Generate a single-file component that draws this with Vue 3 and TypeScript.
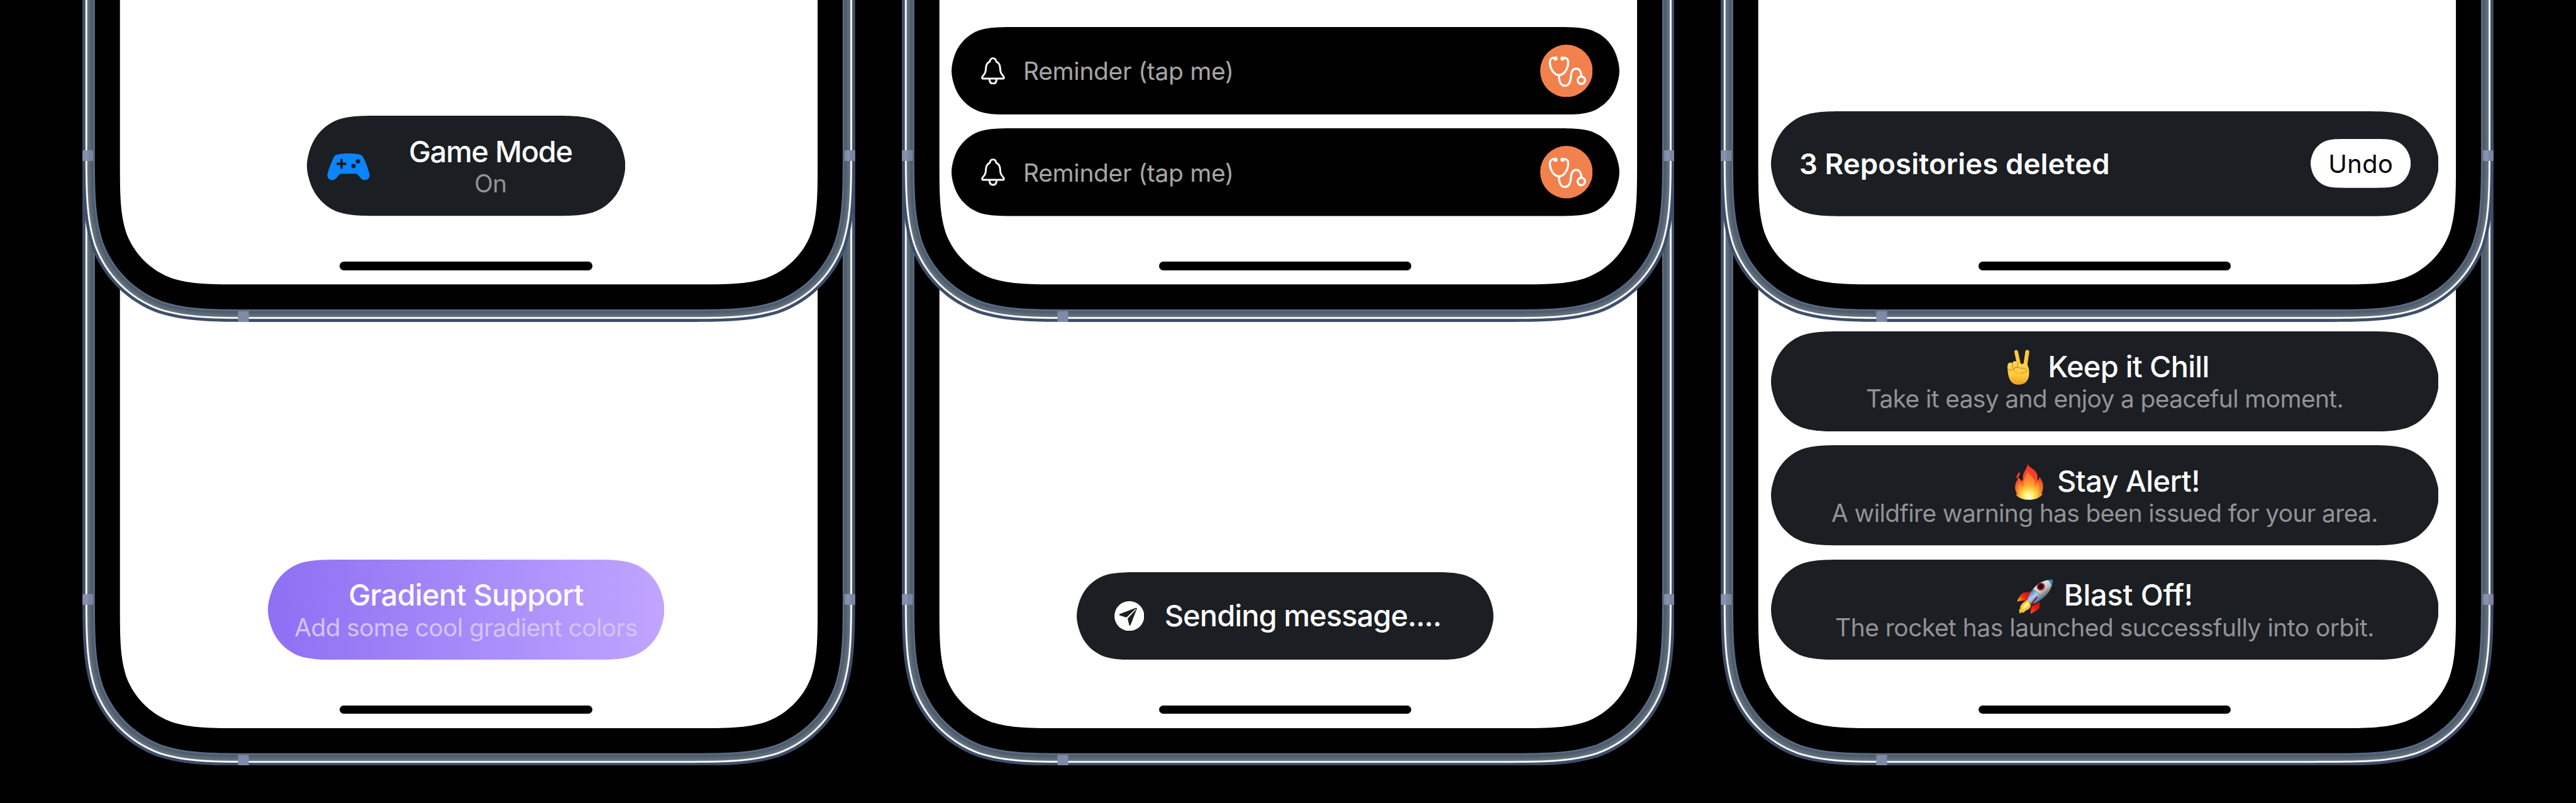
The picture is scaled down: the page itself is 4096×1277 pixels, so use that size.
<script setup lang="ts">
interface Ring { inset: number; color: string }
interface Notice {
  emoji: 'peace' | 'fire' | 'rocket'
  title: string
  titleTracking: number
  text: string
  textTracking: number
}

const PHONE_WIDTH = 1296
const OUTER_RADIUS = 201

/* Phone outline with continuous bottom corners; it runs off the top of the box. */
function framePath(inset: number, height: number): string {
  const r = OUTER_RADIUS - inset
  const L = inset
  const R = PHONE_WIDTH - inset
  const B = height - inset
  const a = 1.528665 * r, b = 1.08849 * r, c = 0.868407 * r
  const d = 0.631494 * r, e = 0.372824 * r, f = 0.16906 * r, g = 0.074911 * r
  return `M${L} 0V${B - a}C${L} ${B - b} ${L} ${B - c} ${L + g} ${B - d}` +
    `C${L + f} ${B - e} ${L + e} ${B - f} ${L + d} ${B - g}` +
    `C${L + c} ${B} ${L + b} ${B} ${L + a} ${B}H${R - a}` +
    `C${R - b} ${B} ${R - c} ${B} ${R - d} ${B - g}` +
    `C${R - e} ${B - f} ${R - f} ${B - e} ${R - g} ${B - d}` +
    `C${R} ${B - c} ${R} ${B - b} ${R} ${B - a}V0Z`
}

/* Capsule whose ends ease into the straight edges. */
function pillPath(w: number, h: number): string {
  const r = h / 2
  const p = (x: number, y: number) => `${x * r} ${y * r}`
  const q = (x: number, y: number) => `${w - x * r} ${y * r}`
  return `M${p(0, 1)}C${p(0, 0.88)} ${p(0.03, 0.76)} ${p(0.0749, 0.6315)}` +
    `C${p(0.16906, 0.3728)} ${p(0.3728, 0.16906)} ${p(0.6315, 0.0749)}` +
    `C${p(0.8684, 0)} ${p(1.0885, 0)} ${p(1.5287, 0)}L${q(1.5287, 0)}` +
    `C${q(1.0885, 0)} ${q(0.8684, 0)} ${q(0.6315, 0.0749)}` +
    `C${q(0.3728, 0.16906)} ${q(0.16906, 0.3728)} ${q(0.0749, 0.6315)}` +
    `C${q(0.03, 0.76)} ${q(0, 0.88)} ${q(0, 1)}` +
    `C${q(0, 1.12)} ${q(0.03, 1.24)} ${q(0.0749, 1.3685)}` +
    `C${q(0.16906, 1.6272)} ${q(0.3728, 1.83094)} ${q(0.6315, 1.9251)}` +
    `C${q(0.8684, 2)} ${q(1.0885, 2)} ${q(1.5287, 2)}L${p(1.5287, 2)}` +
    `C${p(1.0885, 2)} ${p(0.8684, 2)} ${p(0.6315, 1.9251)}` +
    `C${p(0.3728, 1.83094)} ${p(0.16906, 1.6272)} ${p(0.0749, 1.3685)}` +
    `C${p(0.03, 1.24)} ${p(0, 1.12)} ${p(0, 1)}Z`
}

const rings: Ring[] = [
  { inset: 0, color: '#3e4e69' },
  { inset: 4.9, color: '#b9bfc9' },
  { inset: 5.5, color: '#ffffff' },
  { inset: 7.8, color: '#c4c8ce' },
  { inset: 8.3, color: '#66717e' },
  { inset: 10, color: '#606c79' },
  { inset: 12, color: '#596675' },
  { inset: 14, color: '#526070' },
  { inset: 16, color: '#4b596a' },
  { inset: 18, color: '#5a6a80' },
  { inset: 21, color: '#000000' },
  { inset: 63, color: '#ffffff' },
]

const phones = [
  { id: 'game', column: 0, layer: 'front', height: 540 },
  { id: 'gradient', column: 0, layer: 'rear', height: 1084 },
  { id: 'reminders', column: 1, layer: 'front', height: 540 },
  { id: 'sending', column: 1, layer: 'rear', height: 1084 },
  { id: 'undo', column: 2, layer: 'front', height: 540 },
  { id: 'stack', column: 2, layer: 'rear', height: 1084 },
]
const columns = [0, 1, 2].map(c => phones.filter(p => p.column === c))

const notices: Notice[] = [
  { emoji: 'peace', title: 'Keep it Chill', titleTracking: -0.074, text: 'Take it easy and enjoy a peaceful moment.', textTracking: -0.064 },
  { emoji: 'fire', title: 'Stay Alert!', titleTracking: -0.066, text: 'A wildfire warning has been issued for your area.', textTracking: -0.066 },
  { emoji: 'rocket', title: 'Blast Off!', titleTracking: -0.02, text: 'The rocket has launched successfully into orbit.', textTracking: -0.049 },
]
</script>

<template>
  <main class="stage">
    <div v-for="(column, ci) in columns" :key="ci" class="column">
      <section v-for="phone in column" :key="phone.id" class="phone" :class="phone.layer">
        <svg class="frame" :viewBox="`0 0 1296 ${phone.height}`" preserveAspectRatio="none" aria-hidden="true">
          <defs>
            <linearGradient :id="`side-${phone.id}`">
              <stop offset="0" stop-color="#7d87a3" /><stop offset=".4" stop-color="#8b94b1" />
              <stop offset=".65" stop-color="#7b85a1" /><stop offset="1" stop-color="#7a849f" />
            </linearGradient>
          </defs>
          <path v-for="ring in rings" :key="ring.inset" :d="framePath(ring.inset, phone.height)" :fill="ring.color" />
          <rect x="0" :y="phone.height - 288" width="18" height="18" :fill="`url(#side-${phone.id})`" />
          <rect x="1278" :y="phone.height - 288" width="18" height="18" :fill="`url(#side-${phone.id})`" />
          <rect x="261" :y="phone.height - 18" width="18" height="18" fill="#808aa7" />
        </svg>

        <div class="screen">
          <div v-if="phone.id === 'game'" class="pill game">
            <svg class="shape" viewBox="0 0 534 168" preserveAspectRatio="none"><path :d="pillPath(534, 168)" fill="#1b1e22" /></svg>
            <svg class="controller" viewBox="0 0 72 45">
              <path fill="#0a84ff" fill-rule="evenodd" d="M16.5 2C27 -.5 45 -.5 55.500 2C58 2.600 59.700 4.200 60.900 6.800C65.500 16.500 69 25.500 71.200 34.500C72.400 40.500 68.500 44.700 63.500 44.700C60.200 44.700 57.800 43.200 56 40.800L50.800 34.900C50.200 34.200 49.400 33.900 48.500 33.900H23.500C22.600 33.900 21.800 34.200 21.200 34.900L16 40.800C14.200 43.200 11.800 44.700 8.500 44.700C3.500 44.700 -.4 40.500 .8 34.500C3 25.500 6.500 16.500 11.100 6.800C12.300 4.200 14 2.600 16.500 2ZM24.300 8.800C23 8.800 22.200 9.700 22.200 10.900V15.200H17.800C16.500 15.200 15.700 16.100 15.700 17.300S16.500 19.400 17.800 19.400H22.200V23.800C22.200 25 23 25.900 24.300 25.900S26.400 25 26.400 23.800V19.400H30.700C32 19.400 32.900 18.500 32.900 17.300S32 15.200 30.700 15.200H26.400V10.900C26.400 9.700 25.600 8.800 24.300 8.800ZM51.900 9.500A3.700 3.700 0 1 0 51.900 16.900A3.700 3.700 0 1 0 51.900 9.500ZM44.500 17.500A3.700 3.700 0 1 0 44.500 24.900A3.700 3.700 0 1 0 44.500 17.500Z" />
            </svg>
            <div class="copy">
              <div class="title" :style="{ letterSpacing: '-0.132rem' }">Game Mode</div>
              <div class="sub" :style="{ letterSpacing: '-0.07rem' }">On</div>
            </div>
          </div>

          <div v-else-if="phone.id === 'gradient'" class="pill gradient">
            <svg class="shape" viewBox="0 0 665 168" preserveAspectRatio="none">
              <defs><linearGradient id="violet"><stop offset="0" stop-color="#8f6ff3" /><stop offset=".5" stop-color="#a68af9" /><stop offset="1" stop-color="#c1a5ff" /></linearGradient></defs>
              <path :d="pillPath(665, 168)" fill="url(#violet)" />
            </svg>
            <div class="copy">
              <div class="title" :style="{ letterSpacing: '-0.073rem' }">Gradient Support</div>
              <div class="sub pale" :style="{ letterSpacing: '-0.061rem' }">Add some cool gradient colors</div>
            </div>
          </div>

          <template v-else-if="phone.id === 'reminders'">
            <div v-for="n in 2" :key="n" class="pill reminder">
              <svg class="shape" viewBox="0 0 1120 147" preserveAspectRatio="none"><path :d="pillPath(1120, 147)" fill="#000" /></svg>
              <svg class="bell" viewBox="0 0 40 46" fill="none" stroke="#fff" stroke-width="3.1" stroke-linecap="round" stroke-linejoin="round">
                <path d="M20 1.700C16.900 1.700 15.100 3.800 14.700 7.200C10.300 9 8.200 13.200 8 18.600C7.800 25.300 6.600 27.200 3.300 31C1 33.700 1.300 35.900 4 35.900H36C38.700 35.900 39 33.700 36.700 31C33.400 27.200 32.200 25.300 32 18.600C31.800 13.200 29.700 9 25.300 7.200C24.900 3.800 23.100 1.700 20 1.700Z" />
                <path d="M13.900 36.500C14.100 41 16.200 44.300 20 44.300S25.900 41 26.100 36.500" />
              </svg>
              <span class="label">Reminder (tap me)</span>
              <svg class="badge" viewBox="0 0 88 88" fill="none" stroke="#fff" stroke-width="3.500" stroke-linecap="round">
                <circle cx="44" cy="44" r="44" fill="#f3814d" stroke="none" />
                <circle cx="25.700" cy="23.200" r="3.500" fill="#fff" stroke="none" />
                <circle cx="37.500" cy="23.200" r="3.500" fill="#fff" stroke="none" />
                <path d="M25 22.200C18.500 21.300 16 24.500 16.300 31C16.900 41 23.500 51 31.600 51S46.300 41 46.900 31C47.200 24.500 44.700 21.300 38.200 22.200" />
                <path d="M31.600 51C31.200 62 34.800 69 41.400 69C48 69 50.900 62.500 51.600 53C52.200 44.500 55 40.300 60.400 40.300C66.200 40.300 69 46 69 53.400" />
                <circle cx="69" cy="59.700" r="6.200" />
              </svg>
            </div>
          </template>

          <div v-else-if="phone.id === 'sending'" class="pill sending">
            <svg class="shape" viewBox="0 0 699 147" preserveAspectRatio="none"><path :d="pillPath(699, 147)" fill="#1b1e22" /></svg>
            <svg class="plane" viewBox="0 0 50 50">
              <circle cx="25" cy="25" r="25" fill="#fff" />
              <path fill="#1b1e22" d="M35.700 11.400L9.300 21.400C7.700 22.100 7.700 23.400 9.300 23.900L19.300 27.100C20 27.300 20.500 27.200 21 26.700L36.300 12.200ZM37.200 13L22.800 28.400C22.300 28.900 22.200 29.500 22.400 30.200L24.800 40C25.200 41.400 26.500 41.400 27.100 39.900L37.500 13.200Z" />
              <path fill="#1b1e22" d="M34.800 12.100L37 11.400Q37.900 11.500 37.600 12.600L36.800 14.800Z" />
            </svg>
            <div class="title" :style="{ letterSpacing: '-0.094rem' }">Sending message....</div>
          </div>

          <div v-else-if="phone.id === 'undo'" class="pill undo">
            <svg class="shape" viewBox="0 0 1120 176" preserveAspectRatio="none"><path :d="pillPath(1120, 176)" fill="#1b1e22" /></svg>
            <span class="deleted">3 Repositories deleted</span>
            <button class="action" type="button">
              <svg class="shape" viewBox="0 0 168 82" preserveAspectRatio="none"><path :d="pillPath(168, 82)" fill="#fff" /></svg>
              <span>Undo</span>
            </button>
          </div>

          <template v-else>
            <div v-for="n in notices" :key="n.emoji" class="pill notice">
              <svg class="shape" viewBox="0 0 1120 168" preserveAspectRatio="none"><path :d="pillPath(1120, 168)" fill="#1b1e22" /></svg>
              <div class="copy">
                <div class="title" :style="{ letterSpacing: n.titleTracking + 'rem' }">
                  <svg v-if="n.emoji === 'peace'" class="emoji" viewBox="15 30 198 204" role="img" aria-label="Victory hand">
                    <defs>
                      <linearGradient id="skin" x1="0" y1="0" x2="0" y2="1"><stop offset="0" stop-color="#ffd557" /><stop offset=".6" stop-color="#fec93c" /><stop offset="1" stop-color="#e8a021" /></linearGradient>
                    </defs>
                    <path d="M143 125L153 57" stroke="#f0b02c" stroke-width="20" stroke-linecap="round" />
                    <path d="M141 125L151 58" stroke="#fecb40" stroke-width="15" stroke-linecap="round" />
                    <path d="M112 125L97 57" stroke="#f0b02c" stroke-width="19" stroke-linecap="round" />
                    <path d="M110 125L96 58" stroke="#fecd45" stroke-width="14" stroke-linecap="round" />
                    <path d="M54 150C52 135 52 118 60 113C67 109 74 110 78 114C80 106 86 103 93 104C100 105 103 110 105 117L124 118L148 114C158 128 163 145 162 165C161 202 142 222 108 222C75 222 58 200 54 150Z" fill="url(#skin)" />
                    <path d="M78 114C76 124 78 140 82 146M55 142C60 151 72 151 79 145M104 114C106 124 106 130 102 136C98 134 90 135 86 140" fill="none" stroke="#b87816" stroke-width="3" stroke-linecap="round" />
                    <path d="M85 145C90 135 100 134 112 137L140 142C152 144 154 157 142 160C132 162 122 163 117 167" fill="none" stroke="#bd7d18" stroke-width="3" stroke-linecap="round" />
                    <path d="M85 148C87 158 96 162 106 164" fill="none" stroke="#cf911f" stroke-width="3" stroke-linecap="round" />
                  </svg>
                  <svg v-else-if="n.emoji === 'fire'" class="emoji" viewBox="63 605 198 204" role="img" aria-label="Fire">
                    <defs>
                      <radialGradient id="flame" gradientUnits="userSpaceOnUse" cx="161" cy="786" r="165"><stop offset="0" stop-color="#fffde0" /><stop offset=".13" stop-color="#fff27c" /><stop offset=".26" stop-color="#fec532" /><stop offset=".4" stop-color="#fb7d2b" /><stop offset=".62" stop-color="#f5472b" /><stop offset="1" stop-color="#ee3323" /></radialGradient>
                      <radialGradient id="core" gradientUnits="userSpaceOnUse" cx="161" cy="784" r="120"><stop offset="0" stop-color="#fffff0" /><stop offset=".2" stop-color="#fff06a" /><stop offset=".45" stop-color="#fdb534" /><stop offset="1" stop-color="#fb7636" /></radialGradient>
                    </defs>
                    <path fill="url(#flame)" d="M155 619C158 638 193 643 203 672C206 683 205 693 204 704C210 701 214 694 214 686C226 700 234 716 233 736C233 748 229 760 224 770L232 768C227 781 213 788 203 793C179 803 143 803 121 793C108 788 98 781 95 770L103 772C96 762 92 750 92 738C92 716 103 705 107 688C115 692 122 700 125 708C131 704 132 697 131 689C129 662 151 648 155 619Z" />
                    <path fill="#f4452a" d="M116 660C105 667 98 677 99 693L102 691C112 684 117 675 116 660Z" />
                    <path fill="url(#core)" d="M152 653C159 672 186 684 188 707C189 718 185 728 190 730C198 728 203 722 207 713C218 735 218 766 199 784C183 799 139 799 122 784C108 768 106 741 115 719C120 730 126 735 132 735C141 727 138 715 138 705C138 685 152 675 152 653Z" opacity=".75" />
                  </svg>
                  <svg v-else class="emoji" viewBox="102 1180 198 204" role="img" aria-label="Rocket">
                    <defs>
                      <linearGradient id="hull" gradientUnits="userSpaceOnUse" x1="200" y1="1215" x2="252" y2="1283"><stop offset="0" stop-color="#4f8fca" /><stop offset=".28" stop-color="#d9e6ee" /><stop offset=".6" stop-color="#c3c8c8" /><stop offset="1" stop-color="#55626c" /></linearGradient>
                      <linearGradient id="hull-tail" gradientUnits="userSpaceOnUse" x1="172" y1="1262" x2="218" y2="1318"><stop offset="0" stop-color="#3f78b4" /><stop offset=".4" stop-color="#a9d2ef" /><stop offset="1" stop-color="#27588f" /></linearGradient>
                      <linearGradient id="fin-left" gradientUnits="userSpaceOnUse" x1="170" y1="1268" x2="112" y2="1312"><stop offset="0" stop-color="#c40f0d" /><stop offset=".55" stop-color="#ee2b17" /><stop offset="1" stop-color="#ffb52a" /></linearGradient>
                      <linearGradient id="fin-right" gradientUnits="userSpaceOnUse" x1="215" y1="1310" x2="176" y2="1372"><stop offset="0" stop-color="#b30d0d" /><stop offset=".6" stop-color="#ea2216" /><stop offset="1" stop-color="#fb5a20" /></linearGradient>
                    </defs>
                    <path fill="url(#fin-left)" d="M184 1263C165 1261 143 1264 132 1270C122 1280 112 1296 106 1311C122 1307 140 1306 158 1308Z" />
                    <path fill="#fbc62e" d="M160 1303C140 1312 124 1328 121 1341L124 1343L114 1358L119 1360L116 1372L133 1365L137 1369L152 1356C165 1352 173 1343 178 1330Z" />
                    <path fill="#fff08a" d="M163 1312C148 1318 136 1332 131 1351C147 1346 161 1338 167 1328Z" />
                    <path fill="url(#fin-right)" d="M219 1312L180 1336C176 1347 174 1360 174 1373C189 1367 206 1356 217 1346C222 1335 222 1323 219 1312Z" />
                    <path fill="url(#hull-tail)" d="M188 1246C174 1262 164 1281 159 1302C164 1312 172 1320 181 1325C202 1319 220 1310 236 1294Z" />
                    <path fill="url(#hull)" d="M187 1248C207 1219 247 1200 284 1202C286 1236 266 1274 235 1295C222 1276 206 1261 187 1248Z" />
                    <path fill="#3d7cc0" d="M260 1203C269 1201 277 1201 284 1202C286 1212 284 1224 280 1234C277 1221 271 1211 260 1203Z" />
                    <path fill="none" stroke="#d8a13b" stroke-width="2.500" d="M187 1248C206 1261 222 1276 235 1295" />
                    <ellipse cx="226" cy="1237" rx="21" ry="19" fill="#c8171c" transform="rotate(-35 226 1237)" />
                    <ellipse cx="225" cy="1236" rx="14" ry="12.500" fill="#151013" transform="rotate(-35 225 1236)" />
                    <path fill="none" stroke="#a80f0f" stroke-width="7" stroke-linecap="round" d="M206 1290C195 1302 184 1315 176 1331" />
                  </svg>
                  <span>{{ n.title }}</span>
                </div>
                <div class="sub" :style="{ letterSpacing: n.textTracking + 'rem' }">{{ n.text }}</div>
              </div>
            </div>
          </template>

          <div class="home" />
        </div>
      </section>
    </div>
  </main>
</template>

<style>
html {
  font-size: 9.48148px;
}
body {
  background: #000;
}
</style>

<style scoped>
.stage {
  box-sizing: border-box;
  width: 432rem;
  height: 134.7rem;
  padding-left: 13.8rem;
  display: flex;
  gap: 7.8rem;
  background: #000;
  overflow: hidden;
  font-family: Inter, "Liberation Sans", sans-serif;
}
.column {
  width: 129.6rem;
  flex: none;
  display: flex;
  flex-direction: column;
}
.phone {
  position: relative;
  flex: none;
  display: flex;
  flex-direction: column;
}
.front {
  height: 54rem;
  z-index: 1;
}
.rear {
  height: 108.4rem;
  margin-top: -34rem;
}
.frame,
.shape {
  position: absolute;
  inset: 0;
  width: 100%;
  height: 100%;
  display: block;
}
.screen {
  position: relative;
  flex: 1;
  margin: 0 7.2rem 6.3rem 6.3rem;
  display: flex;
  flex-direction: column;
  justify-content: flex-end;
  align-items: center;
  gap: 2.35rem;
}
.home {
  width: 42.3rem;
  height: 1.45rem;
  margin: 5.3rem 0 2.35rem;
  border-radius: 0.72rem;
  background: #000;
}
.pill {
  position: relative;
  display: flex;
  align-items: center;
  box-sizing: border-box;
  height: 16.8rem;
  white-space: nowrap;
}
.pill > *:not(.shape) {
  position: relative;
}
.game {
  width: 53.4rem;
  padding-left: 3.4rem;
}
.controller {
  width: 7.2rem;
  height: 4.5rem;
  top: 0.15rem;
  margin-right: 6.5rem;
}
.copy {
  display: flex;
  flex-direction: column;
  align-items: center;
}
.title {
  display: flex;
  align-items: center;
  justify-content: center;
  height: 5.85rem;
  line-height: 6.05rem;
  font-size: 4.95rem;
  font-weight: 500;
  color: #fff;
}
.copy .title {
  box-sizing: border-box;
  padding-top: 0.2rem;
}
.sub {
  height: 5rem;
  line-height: 5rem;
  font-size: 4.1rem;
  color: #919396;
}
.sub.pale {
  color: #d3c5f6;
}
.gradient {
  width: 66.5rem;
  justify-content: center;
}
.reminder {
  width: 112rem;
  height: 14.7rem;
  padding: 0 4.45rem 0 5rem;
}
.bell {
  width: 4rem;
  height: 4.6rem;
}
.label {
  margin-left: 3.05rem;
  font-size: 4.1rem;
  letter-spacing: -0.03rem;
  color: #a6a6a6;
}
.badge {
  width: 8.8rem;
  height: 8.8rem;
  margin-left: auto;
}
.sending {
  width: 69.9rem;
  height: 14.7rem;
  padding-left: 6.3rem;
}
.plane {
  width: 5rem;
  height: 5rem;
  margin-right: 3.4rem;
}
.undo {
  width: 112rem;
  height: 17.6rem;
  padding: 0 4.65rem 0 4.8rem;
  justify-content: space-between;
}
.deleted {
  font-size: 4.8rem;
  font-weight: 600;
  letter-spacing: 0.01rem;
  color: #fff;
}
.action {
  width: 16.8rem;
  height: 8.2rem;
  padding: 0;
  border: 0;
  background: none;
  color: #000;
  font: 400 4.2rem Inter, "Liberation Sans", sans-serif;
  letter-spacing: 0.04rem;
}
.action span {
  position: relative;
}
.notice {
  width: 112rem;
  justify-content: center;
}
.emoji {
  width: 6.6rem;
  height: 6.8rem;
  margin-right: 1.4rem;
  flex: none;
}
</style>
